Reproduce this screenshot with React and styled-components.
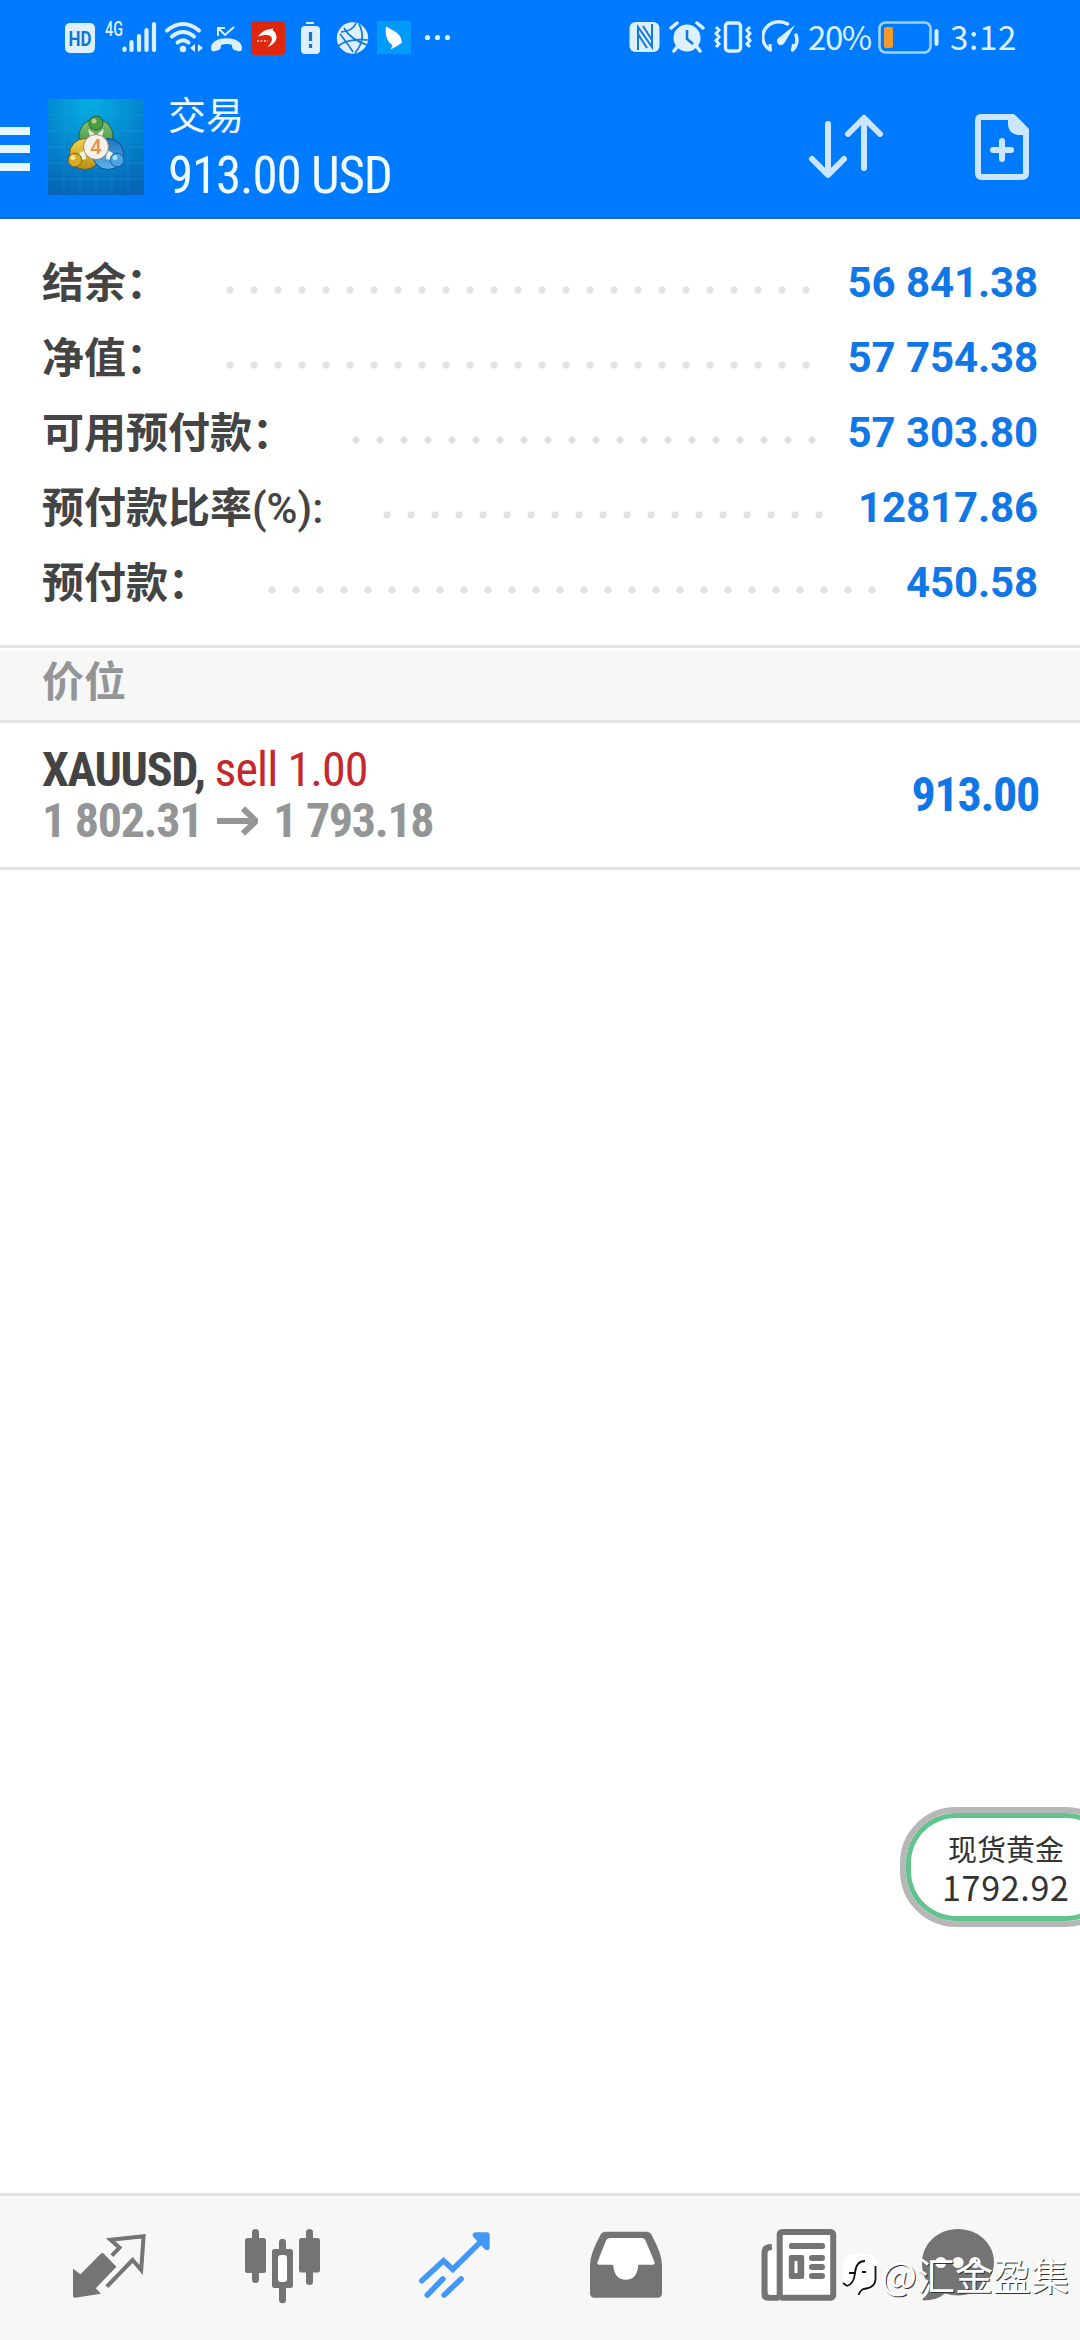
import React from 'react';
import styled, { createGlobalStyle } from 'styled-components';

const accountRows = [
    { label: '结余：', value: '56 841.38', labelWidth: 176, dots: 25 },
    { label: '净值：', value: '57 754.38', labelWidth: 176, dots: 25 },
    { label: '可用预付款：', value: '57 303.80', labelWidth: 302, dots: 20 },
    { label: '预付款比率', suffix: '(%):', value: '12817.86', labelWidth: 333, dots: 19 },
    { label: '预付款：', value: '450.58', labelWidth: 218, dots: 26 },
];

const LIGHT = '#dcf0ff';

// every status glyph is drawn in the coordinates of the status bar itself
const Glyph = ({ x, w, gap, children }) => (
    <StatusSvg width={w} height="56" viewBox={`${x} 10 ${w} 56`} $gap={gap}>
        {children}
    </StatusSvg>
);

const StatusLeft = () => (
    <StatusGroup>
        <Glyph x={64} w={32} gap={64}>
            <rect x="65" y="23" width="30" height="30" rx="5" fill={LIGHT} />
            <text x="80" y="45.500" textAnchor="middle" textLength="23" lengthAdjust="spacingAndGlyphs" fontFamily="Roboto, sans-serif" fontWeight="700" fontSize="20" fill="#1a72cf">HD</text>
        </Glyph>
        <Glyph x={104} w={54} gap={8}>
            <text x="105" y="35.500" textLength="18" lengthAdjust="spacingAndGlyphs" fontFamily="Roboto, sans-serif" fontWeight="500" fontSize="19.500" fill={LIGHT}>4G</text>
            <g stroke={LIGHT} strokeWidth="4.200" strokeLinecap="round">
                <path d="M124.500 48.500v1.500M131.500 42v8M139 36v14M146.500 30v20M154 24v26" />
            </g>
        </Glyph>
        <Glyph x={164} w={40} gap={6}>
            <g fill="none" stroke={LIGHT} strokeWidth="4" strokeLinecap="round">
                <path d="M167 30.500q16-13 32 0M172 36.500q11-9 22 0M177.500 42.500q5.500-4.500 11 0" />
            </g>
            <circle cx="183" cy="49" r="3.200" fill={LIGHT} />
            <path d="M190 48l5-4v8zM198 44l5 4-5 4z" fill={LIGHT} />
        </Glyph>
        <Glyph x={210} w={34} gap={6}>
            <path d="M218 36v-8h7M219 29l6 6 9-8" fill="none" stroke={LIGHT} strokeWidth="2" />
            <path d="M211 48c0-13 31-13 31 0q0 4-4 3l-4-1q-2-1-2-5-5-2-11 0 0 4-2 5l-4 1q-4 1-4-3z" fill={LIGHT} />
        </Glyph>
        <Glyph x={250} w={36} gap={6}>
            <rect x="251" y="21" width="34" height="34" rx="4" fill="#df2710" />
            <path d="M258 36.500c4-5 8-7 13-7.500l2-1-.500 2c6 4 6 13-5 17 7-7 5-12-1-12-3 0-5 .500-8.500 1.500z" fill="#fff" />
            <path d="M257 41h11" stroke="#f5a79b" strokeWidth="2" strokeDasharray="2 1.500" />
        </Glyph>
        <Glyph x={300} w={22} gap={14}>
            <path d="M306 22h8v2h-8z" fill={LIGHT} />
            <rect x="301" y="26" width="19" height="28" rx="4" fill={LIGHT} />
            <path d="M310.500 32v9M310.500 44v4" stroke="#1a72cf" strokeWidth="3.200" />
        </Glyph>
        <Glyph x={336} w={34} gap={14}>
            <circle cx="352.500" cy="38" r="15.700" fill={LIGHT} />
            <path d="M341 32q12-1 15-9M344 28q6 11 23 17M338 46q10-8 30-6M359 24q8 15-4 29M340 34q8 10 13 18" fill="none" stroke="#1478e0" strokeWidth="1.700" />
        </Glyph>
        <Glyph x={377} w={36} gap={7}>
            <rect x="377" y="21" width="34" height="33" fill="#039bfb" />
            <path d="M386 26.500l9 5q6 4 6.500 9l.500 2-4 3-7.500 4 2-4-4-4q-4-7-2.500-15z" fill="#fff" />
        </Glyph>
        <Glyph x={424} w={28} gap={11}>
            <circle cx="427.500" cy="37.500" r="2.600" fill={LIGHT} />
            <circle cx="437.500" cy="37.500" r="2.600" fill={LIGHT} />
            <circle cx="447.500" cy="37.500" r="2.600" fill={LIGHT} />
        </Glyph>
    </StatusGroup>
);

const StatusRight = () => (
    <StatusGroup>
        <Glyph x={628} w={32} gap={0}>
            <rect x="628.500" y="22" width="30" height="30" rx="6" fill={LIGHT} />
            <path d="M637 50V27l14 20V24M637 34l9 14M651 40l-9-14" fill="none" stroke="#1478e0" strokeWidth="2" />
        </Glyph>
        <Glyph x={668} w={36} gap={8}>
            <circle cx="686" cy="38" r="13.500" fill={LIGHT} />
            <path d="M670 28l6-5M702 28l-6-5M676 47l-3 4M696 47l3 4" stroke={LIGHT} strokeWidth="3.500" strokeLinecap="round" />
            <path d="M686 30v9l6 5" fill="none" stroke="#1478e0" strokeWidth="2.600" />
        </Glyph>
        <Glyph x={712} w={40} gap={8}>
            <rect x="724.500" y="23" width="15" height="28" rx="3" fill="none" stroke={LIGHT} strokeWidth="3.400" />
            <path d="M715 27l3 3-3 3.500 3 3.500-3 3.500 3 3.500-3 3M749 27l-3 3 3 3.500-3 3.500 3 3.500-3 3.500 3 3" fill="none" stroke={LIGHT} strokeWidth="3" />
        </Glyph>
        <Glyph x={761} w={38} gap={9}>
            <path d="M769.500 50A16 15 0 0 1 786.500 24M795 35q3 9-3.500 15" fill="none" stroke={LIGHT} strokeWidth="3.400" strokeLinecap="round" />
            <path d="M769.500 50l-.500-6M791.500 50l1-6" stroke={LIGHT} strokeWidth="3" />
            <path d="M794 25l-10.500 18a4 4 0 1 1-6-5z" fill={LIGHT} />
        </Glyph>
        <StatusText $width={70} $gap={8} $spacing={-1.4}>20%</StatusText>
        <Glyph x={877} w={62} gap={0}>
            <rect x="878.500" y="22.500" width="51" height="30" rx="6" fill="none" stroke="#9fd2ff" strokeWidth="2.600" />
            <rect x="883" y="27" width="9" height="21" rx="2" fill="#f39a2b" />
            <path d="M935.500 31v13" stroke={LIGHT} strokeWidth="4" strokeLinecap="round" />
        </Glyph>
        <StatusText $width={68} $gap={10} $spacing={0.7}>3:12</StatusText>
    </StatusGroup>
);

const AppLogo = () => (
    <LogoSvg width="96" height="96" viewBox="0 0 96 96">
        <defs>
            <radialGradient id="sea" cx="45%" cy="5%" r="100%">
                <stop offset="0" stopColor="#05aee0" />
                <stop offset=".5" stopColor="#0487cf" />
                <stop offset="1" stopColor="#0664b4" />
            </radialGradient>
            <linearGradient id="green" x1="0" y1="0" x2="0" y2="1">
                <stop offset="0" stopColor="#86c072" />
                <stop offset="1" stopColor="#2f8a3a" />
            </linearGradient>
            <linearGradient id="gold" x1="0" y1="0" x2="0" y2="1">
                <stop offset="0" stopColor="#efd54a" />
                <stop offset="1" stopColor="#b98d16" />
            </linearGradient>
            <linearGradient id="azure" x1="0" y1="0" x2="0" y2="1">
                <stop offset="0" stopColor="#1d72bd" />
                <stop offset="1" stopColor="#5cb4ea" />
            </linearGradient>
        </defs>
        <rect width="96" height="96" fill="url(#sea)" />
        <path d="M0 16h96M0 32h96M0 48h96M0 64h96M0 80h96M16 0v96M32 0v96M48 0v96M64 0v96M80 0v96" stroke="#4ac1ea" strokeOpacity=".16" />
        <circle cx="48" cy="37" r="17" fill="url(#green)" stroke="#17613e" />
        <circle cx="37" cy="55" r="15.500" fill="url(#gold)" stroke="#5c5d22" />
        <circle cx="60" cy="55" r="15.500" fill="url(#azure)" stroke="#0d4d8c" />
        <path d="M40 30l8 6 8-6-2 7H42zM31 54l6-3 1 9-4 1zM65 54l-6-3-1 9 4 1z" fill="#e8f5df" />
        <circle cx="48" cy="24" r="7" fill="#4d9b45" stroke="#1f6837" />
        <circle cx="27" cy="61" r="6.800" fill="#d5ad25" stroke="#826719" />
        <circle cx="69" cy="61" r="6.800" fill="#4ba3df" stroke="#185f9f" />
        <circle cx="46" cy="22" r="2.500" fill="#a9d48c" />
        <circle cx="25" cy="58.500" r="2.500" fill="#f7e590" />
        <circle cx="67" cy="58.500" r="2.500" fill="#a9dcf9" />
        <circle cx="48" cy="48" r="12.500" fill="#f6f1ea" stroke="#9a8974" />
        <text x="48" y="55" textAnchor="middle" fontFamily="Roboto, sans-serif" fontSize="20" fontWeight="500" fill="#ee8d3e">4</text>
    </LogoSvg>
);

const SortIcon = () => (
    <svg width="80" height="72" viewBox="806 111 80 72">
        <path d="M828 124v50M812 159l16 16 16-16M864 168v-48M848 134l16-16 16 16" fill="none" stroke="#cde6ff" strokeWidth="6" strokeLinecap="round" strokeLinejoin="round" />
    </svg>
);

const NewOrderIcon = () => (
    <svg width="60" height="72" viewBox="972 111 60 72">
        <path d="M981 117h32l13 13v43q0 4-4 4h-40q-4 0-4-4v-52q0-4 3-4z" fill="none" stroke="#cde6ff" strokeWidth="6" strokeLinejoin="round" />
        <path d="M1008 118v7q1 9 10 10h9v-6l-13-12z" fill="#cde6ff" />
        <path d="M1002 141v18M993 150h18" stroke="#cde6ff" strokeWidth="6" strokeLinecap="round" />
    </svg>
);

const QuotesIcon = () => (
    <NavSvg viewBox="0 0 80 80">
        <path d="M4 43.700l7.600 5.600L31.500 29q1.800-2 3.600 0L47.400 41.700 26.800 63.300l5.100 5.400L6 72.700q-2 0-2-2z" fill="#747474" />
        <path d="M42.900 30.700l7.600-8-8.900-8 33-3.400L72.200 45l-8.600-10-25.800 26.700" fill="none" stroke="#747474" strokeWidth="4" />
    </NavSvg>
);

const ChartIcon = () => (
    <NavSvg viewBox="0 0 80 80">
        <g fill="#747474">
            <rect x="3" y="13" width="21" height="35" rx="2.500" />
            <rect x="10" y="4" width="7" height="54" rx="3.500" />
            <rect x="57" y="13" width="21" height="34.500" rx="2.500" />
            <rect x="64" y="4" width="7" height="56" rx="3.500" />
            <rect x="30" y="24" width="21" height="39" rx="2.500" />
            <rect x="37" y="13.700" width="7" height="64.500" rx="3.500" />
        </g>
        <rect x="36" y="30" width="9" height="27" rx="3" fill="#fff" />
    </NavSvg>
);

const TradeIcon = () => (
    <NavSvg viewBox="0 0 80 80">
        <g fill="none" stroke="#4398f6" strokeWidth="5.600" strokeLinecap="round" strokeLinejoin="round">
            <path d="M61.500 10h11.400v12.300z" fill="#4398f6" />
            <path d="M7.800 55.700l21.700-20 9.300 8.600L71.500 12" strokeLinejoin="miter" />
            <path d="M13.300 70l15.500-16M30.200 70l16.900-16" />
        </g>
    </NavSvg>
);

const HistoryIcon = () => (
    <NavSvg viewBox="0 0 80 80">
        <path
            fill="#747474"
            d="M20 6.700h40q4.500 0 6 4Q76 29 76 40v28q0 4.700-4.500 4.700h-63Q4 72.700 4 68V40q0-11 10-29.300 1.500-4 6-4z"
        />
        <path d="M24 13h32q2.500 0 3.500 2.500L68.500 37q.700 2.700-2 2.700H52.300q-1 15-12.500 15t-12.600-15H13.500q-3 0-2-2.700l8.500-21.500q1-2.500 4-2.500z" fill="#fff" />
    </NavSvg>
);

const NewsIcon = () => (
    <NavSvg viewBox="0 0 80 80">
        <path d="M12.800 19v6q-4 0-4 3v38q0 3.700 3 3.700h8v6H9q-6.500 0-6.500-6V27q0-8 10.300-8z" fill="#747474" />
        <rect x="8.700" y="25" width="9" height="44.700" rx="2" fill="#fff" />
        <path d="M8.700 22h4.200v3q-4.200 0-4.200 3z" fill="#747474" />
        <rect x="20.700" y="7" width="53.500" height="65.700" rx="2.500" fill="#fff" stroke="#747474" strokeWidth="6" />
        <g fill="#747474">
            <rect x="30" y="18" width="36" height="6" rx="2.500" />
            <path fillRule="evenodd" d="M32 30h11q2.200 0 2.200 2.200v19.600q0 2.200-2.200 2.200H32q-2.200 0-2.200-2.200V32.200Q29.800 30 32 30zM35.500 36v12h3V36z" />
            <rect x="50" y="30" width="16" height="6" rx="3" />
            <rect x="50" y="39" width="16" height="6" rx="3" />
            <rect x="50" y="48" width="16" height="6" rx="3" />
        </g>
    </NavSvg>
);

const ChatIcon = () => (
    <NavSvg viewBox="0 0 80 80">
        <path d="M40 4c20 0 36 14.500 36 33S60 70.500 40 70.500q-7 0-13-2-8 7-22 7-1-1 0-2 6-4 7-13-8-8-8-22C4 18.500 20 4 40 4z" fill="#747474" />
        <circle cx="22.800" cy="37.500" r="5.600" fill="#fff" />
        <circle cx="40" cy="37.500" r="5.600" fill="#fff" />
        <circle cx="57" cy="37.500" r="5.600" fill="#fff" />
    </NavSvg>
);

const navIcons = [QuotesIcon, ChartIcon, TradeIcon, HistoryIcon, NewsIcon, ChatIcon];

const App = () => (
    <Screen lang="zh-CN">
        <GlobalStyle />
        <StatusBar>
            <StatusLeft />
            <StatusRight />
        </StatusBar>
        <Header>
            <MenuButton>
                <MenuBar />
                <MenuBar />
                <MenuBar />
            </MenuButton>
            <AppLogo />
            <Titles>
                <Title>交易</Title>
                <Profit>913.00 USD</Profit>
            </Titles>
            <HeaderActions>
                <SortIcon />
                <NewOrderIcon />
            </HeaderActions>
        </Header>
        <Summary>
            {accountRows.map((row) => (
                <SummaryRow key={row.label}>
                    <Label $width={row.labelWidth}>
                        {row.label}
                        {row.suffix && <Suffix>{row.suffix}</Suffix>}
                    </Label>
                    <Leader $dots={row.dots} />
                    <Value>{row.value}</Value>
                </SummaryRow>
            ))}
        </Summary>
        <SectionTitle>价位</SectionTitle>
        <Position>
            <div>
                <Symbol>
                    XAUUSD, <Side>sell 1.00</Side>
                </Symbol>
                <Prices>
                    <span>1 802.31</span>
                    <svg width="41" height="30" viewBox="0 0 41 30">
                        <path d="M0 15h38M26 2.500L39 15 26 27.500" fill="none" stroke="#949597" strokeWidth="6" />
                    </svg>
                    <span>1 793.18</span>
                </Prices>
            </div>
            <PositionProfit>913.00</PositionProfit>
        </Position>
        <Blank />
        <BottomNav>
            {navIcons.map((Icon, i) => (
                <NavItem key={i}><Icon /></NavItem>
            ))}
        </BottomNav>
        <PriceBubble>
            <BubbleName>现货黄金</BubbleName>
            <BubblePrice>1792.92</BubblePrice>
        </PriceBubble>
        <Watermark>
            <svg width="38" height="46" viewBox="0 0 38 46">
                <path d="M9 2h19q8 2 8 12v13q0 9-14 12l-4 5V34L3 36Q-1 20 3 9q2-5 6-7z" fill="#fff" />
                <path d="M8 21h7M6 34q7-2 8-13 1-12 10-12M21 20h4M34.500 14v14q-1 8-12 9-3 1-5 6M2 31l4 3" fill="none" stroke="#111" strokeWidth="1.800" />
            </svg>
            <span>@汇金盈集</span>
        </Watermark>
    </Screen>
);

export default App;

const GlobalStyle = createGlobalStyle`
    * {
        box-sizing: border-box;
    }
    body {
        margin: 0;
        background: #fff;
        font-family: Roboto, 'Noto Sans CJK SC', sans-serif;
    }
    svg {
        display: block;
        flex: none;
    }
`;

const Screen = styled.div`
    position: relative;
    display: flex;
    flex-direction: column;
    width: 1080px;
    height: 2340px;
    overflow: hidden;
    background: #fff;
`;

const StatusBar = styled.div`
    display: flex;
    justify-content: space-between;
    height: 76px;
    padding: 10px 62px 0 0;
    background: #007aff;
`;

const StatusGroup = styled.div`
    display: flex;
    height: 56px;
`;

const StatusSvg = styled.svg`
    margin-left: ${(props) => props.$gap}px;
`;

const StatusText = styled.span`
    width: ${(props) => props.$width}px;
    margin-left: ${(props) => props.$gap}px;
    font-family: 'Noto Sans CJK SC', sans-serif;
    font-size: 33px;
    line-height: 53px;
    letter-spacing: ${(props) => props.$spacing}px;
    white-space: nowrap;
    color: #dcf0ff;
`;

const Header = styled.header`
    display: flex;
    height: 143px;
    background: #007aff;
    border-bottom: 2px solid #1c6fc0;
`;

const MenuButton = styled.div`
    display: flex;
    flex-direction: column;
    gap: 10px;
    width: 48px;
    padding-top: 51px;
`;

const MenuBar = styled.span`
    width: 30px;
    height: 8px;
    background: #e6f8ff;
`;

const LogoSvg = styled.svg`
    margin-top: 23px;
`;

const Titles = styled.div`
    padding: 14px 0 0 24px;
    color: #f0fbff;
    white-space: nowrap;
`;

const Title = styled.div`
    font-size: 38px;
    line-height: 52px;
`;

const Profit = styled.div`
    font-size: 51px;
    line-height: 68px;
    font-stretch: 75%;
    letter-spacing: -1.15px;
`;

const HeaderActions = styled.div`
    display: flex;
    justify-content: space-between;
    width: 226px;
    margin: 35px 48px 0 auto;
`;

const Summary = styled.section`
    height: 429px;
    padding: 27px 42px 0;
    border-bottom: 3px solid #e3e3e3;
`;

const SummaryRow = styled.div`
    display: flex;
    align-items: center;
    height: 75px;
    font-size: 42px;
    line-height: 75px;
    white-space: nowrap;
`;

const Label = styled.span`
    width: ${(props) => props.$width}px;
    font-weight: 700;
    color: #444;
`;

const Suffix = styled.span`
    font-weight: 500;
`;

const Leader = styled.span`
    width: ${(props) => props.$dots * 24}px;
    height: 24px;
    margin-top: 12px;
    background: radial-gradient(circle, #e2e2e2 3.2px, transparent 4px) 0 0 / 24px 24px;
`;

const Value = styled.span`
    margin: -2px 0 0 auto;
    font-weight: 700;
    letter-spacing: -0.1px;
    color: #1277e6;
`;

const SectionTitle = styled.div`
    height: 75px;
    padding-left: 42px;
    font-size: 42px;
    font-weight: 700;
    line-height: 63px;
    color: #949597;
    background: #f7f7f7;
    border-top: 3px solid #fff;
    border-bottom: 3px solid #e3e3e3;
`;

const Position = styled.div`
    display: flex;
    justify-content: space-between;
    height: 147px;
    padding: 21px 42px 0;
    font-size: 48px;
    font-weight: 700;
    font-stretch: 75%;
    letter-spacing: -1.3px;
    white-space: nowrap;
    border-bottom: 3px solid #e3e3e3;
`;

const Symbol = styled.div`
    line-height: 51px;
    color: #444;
`;

const Side = styled.span`
    font-weight: 400;
    letter-spacing: -0.9px;
    color: #c4282b;
`;

const Prices = styled.div`
    display: flex;
    align-items: center;
    gap: 15px;
    line-height: 51px;
    color: #949597;
`;

const PositionProfit = styled.div`
    margin-right: -1px;
    line-height: 102px;
    color: #1277e6;
`;

const Blank = styled.div`
    flex: 1;
`;

const BottomNav = styled.nav`
    display: flex;
    height: 147px;
    padding: 29px 0 0 23px;
    background: #f7f7f7;
    border-top: 3px solid #e0e0e0;
`;

const NavItem = styled.div`
    display: flex;
    flex: none;
    justify-content: center;
    width: 172.4px;

    &:last-child {
        padding-right: 27px;
    }
`;

const NavSvg = styled.svg`
    width: 80px;
    height: 80px;
`;

const PriceBubble = styled.div`
    position: absolute;
    top: 1807px;
    left: 900px;
    width: 222px;
    height: 120px;
    padding: 16px 0 0 36px;
    color: #333;
    background: #fff;
    border: 6px solid #b7b7b7;
    border-radius: 56px;
    box-shadow: inset 0 0 0 5px #60c48c;
`;

const BubbleName = styled.div`
    padding-left: 6px;
    font-size: 29px;
    line-height: 44px;
`;

const BubblePrice = styled.div`
    font-family: 'Noto Sans CJK SC', sans-serif;
    font-size: 34px;
    line-height: 28px;
    letter-spacing: 0.7px;
`;

const Watermark = styled.div`
    position: absolute;
    top: 2252px;
    left: 841px;
    display: flex;
    align-items: center;
    gap: 2px;
    font-family: 'Noto Sans CJK SC', sans-serif;
    font-size: 38px;
    line-height: 46px;
    white-space: nowrap;
    color: #fff;
    text-shadow: 1px 1px 0.5px #333;

    span {
        margin-top: -2px;
    }
`;
